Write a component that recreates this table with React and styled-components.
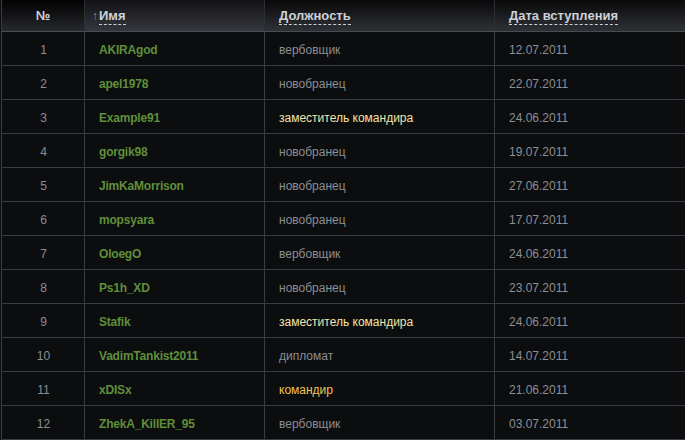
import React from 'react';
import styled, { createGlobalStyle, css } from 'styled-components';

const members = [
  { name: 'AKIRAgod', role: 'вербовщик', date: '12.07.2011' },
  { name: 'apel1978', role: 'новобранец', date: '22.07.2011' },
  { name: 'Example91', role: 'заместитель командира', date: '24.06.2011', rank: 'deputy' },
  { name: 'gorgik98', role: 'новобранец', date: '19.07.2011' },
  { name: 'JimKaMorrison', role: 'новобранец', date: '27.06.2011' },
  { name: 'mopsyara', role: 'новобранец', date: '17.07.2011' },
  { name: 'OloegO', role: 'вербовщик', date: '24.06.2011' },
  { name: 'Ps1h_XD', role: 'новобранец', date: '23.07.2011' },
  { name: 'Stafik', role: 'заместитель командира', date: '24.06.2011', rank: 'deputy' },
  { name: 'VadimTankist2011', role: 'дипломат', date: '14.07.2011' },
  { name: 'xDISx', role: 'командир', date: '21.06.2011', rank: 'commander' },
  { name: 'ZhekA_KillER_95', role: 'вербовщик', date: '03.07.2011' },
];

const roleColors = {
  deputy: '#f4e4a8',
  commander: '#f3c24f',
};

function App() {
  return (
    <>
      <GlobalStyle />
      <Frame>
        <Table>
          <colgroup>
            <col style={{ width: 83 }} />
            <col style={{ width: 180 }} />
            <col style={{ width: 230 }} />
            <col style={{ width: 240 }} />
          </colgroup>
          <thead>
            <tr>
              <HeadCell center>
                <HeadLabel plain>№</HeadLabel>
              </HeadCell>
              <HeadCell sorted>
                <SortArrow>↑</SortArrow>
                <HeadLabel>Имя</HeadLabel>
              </HeadCell>
              <HeadCell>
                <HeadLabel>Должность</HeadLabel>
              </HeadCell>
              <HeadCell>
                <HeadLabel>Дата вступления</HeadLabel>
              </HeadCell>
            </tr>
          </thead>
          <tbody>
            {members.map((m, i) => (
              <tr key={m.name}>
                <NumCell>{i + 1}</NumCell>
                <NameCell>{m.name}</NameCell>
                <RoleCell color={roleColors[m.rank]}>{m.role}</RoleCell>
                <Cell>{m.date}</Cell>
              </tr>
            ))}
          </tbody>
        </Table>
      </Frame>
    </>
  );
}

export default App;

const GlobalStyle = createGlobalStyle`
  html, body {
    margin: 0;
    padding: 0;
    background: #0c0d0f;
  }
  body {
    font-family: 'Liberation Sans', Arial, sans-serif;
  }
`;

const Frame = styled.div`
  width: 685px;
  height: 440px;
  overflow: hidden;
`;

const Table = styled.table`
  margin-left: 1px;
  width: 733px;
  border-collapse: collapse;
  table-layout: fixed;
  background: #0c0d0f;
  border-left: 1px solid #3a3c42;
  border-bottom: 1px solid #3a3c42;
`;

const checker = css`
  background-image:
    repeating-conic-gradient(rgba(255, 255, 255, 0.035) 0 25%, transparent 0 50%),
    linear-gradient(180deg, #050506 0%, #16171a 45%, #2b2d32 100%);
  background-size: 2px 2px, 100% 100%;
`;

const HeadCell = styled.th`
  height: 30px;
  padding: 0 0 1px ${({ center }) => (center ? '0' : '14px')};
  text-align: ${({ center }) => (center ? 'center' : 'left')};
  border-right: 1px solid #2c2e33;
  border-bottom: 1px solid #4a4c53;
  ${checker}
  background-image: ${({ sorted }) =>
    sorted
      ? 'repeating-conic-gradient(rgba(255,255,255,0.05) 0 25%, transparent 0 50%), linear-gradient(180deg, #0c0d0f 0%, #1c1d21 45%, #303238 100%)'
      : undefined};
  white-space: nowrap;

  &:first-child {
    background-image: repeating-conic-gradient(rgba(255, 255, 255, 0.025) 0 25%, transparent 0 50%),
      linear-gradient(180deg, #000 0%, #0e0f11 45%, #24262a 100%);
  }
`;

const HeadLabel = styled.span`
  color: #cdd1d8;
  font-weight: bold;
  font-size: 13px;
  padding-bottom: 1px;
  border-bottom: ${({ plain }) => (plain ? 'none' : '1px dashed #cdd1d8')};
`;

const SortArrow = styled.span`
  color: #8a8e95;
  font-size: 12px;
  margin-left: -7px;
  margin-right: 1px;
`;

const Cell = styled.td`
  height: 31px;
  padding: 2px 0 0 14px;
  font-size: 12px;
  color: #8b8f96;
  border-right: 1px solid #3a3c42;
  border-bottom: 1px solid #3a3c42;
  white-space: nowrap;
`;

const NumCell = styled(Cell)`
  padding: 2px 0 0 1px;
  text-align: center;
`;

const NameCell = styled(Cell)`
  color: #5f8f39;
  font-weight: bold;
  letter-spacing: -0.2px;
`;

const RoleCell = styled(Cell)`
  color: ${({ color }) => color || '#8b8e93'};
`;
